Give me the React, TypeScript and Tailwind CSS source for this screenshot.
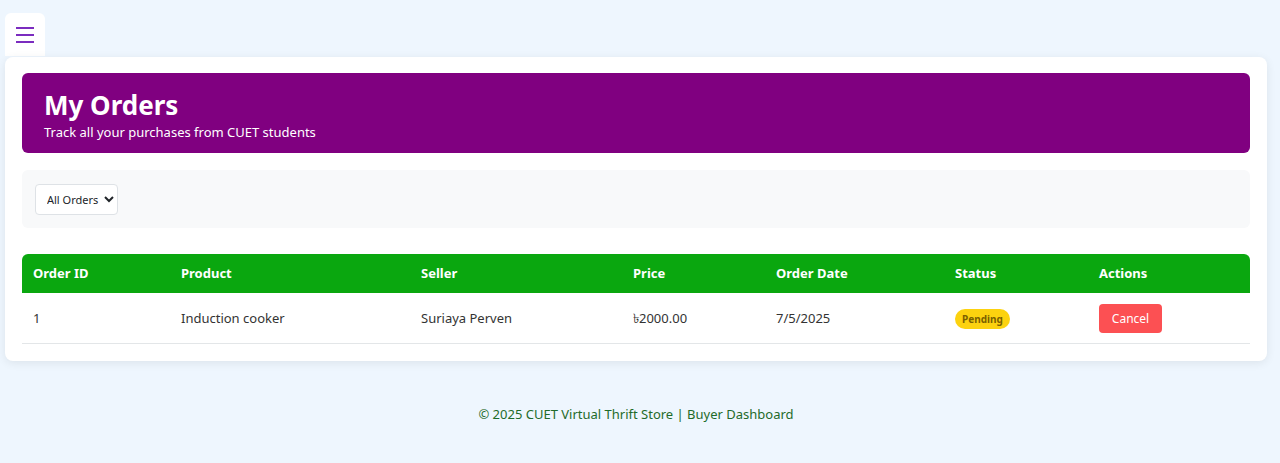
import React, { useState } from 'react';

const orders = [
  {
    id: 1,
    product: 'Induction cooker',
    seller: 'Suriaya Perven',
    price: '৳2000.00',
    date: '7/5/2025',
    status: 'Pending',
  },
];

const App = () => {
  const [filter, setFilter] = useState('all');

  return (
    <div
      className="min-h-[463px] bg-[#eef6fe] pt-[13px] pl-[5px] pr-[13px] text-[13px] text-[#212529]"
      style={{ fontFamily: '"Noto Sans", "Segoe UI", sans-serif' }}
    >
      <button className="flex h-[43px] w-[40px] items-center justify-center rounded-t-md rounded-b-none bg-white text-[#7b2cbf]">
        <svg width="18" height="16" viewBox="0 0 18 16" fill="none" stroke="currentColor" strokeWidth="2">
          <path d="M0 1h18M0 8h18M0 15h18" />
        </svg>
      </button>

      <div className="mt-[1px] rounded-lg bg-white px-[17px] pt-[16px] pb-[17px] shadow-[0_2px_10px_rgba(0,0,0,0.08)]">
        <div className="h-[80px] rounded-md bg-[#800080] px-[22px] pt-[16px] text-white">
          <h1 className="text-[26px] leading-[32px] font-bold">My Orders</h1>
          <p className="mt-[2px] text-[13px] leading-[18px]">Track all your purchases from CUET students</p>
        </div>

        <div className="mt-[17px] flex h-[58px] items-center rounded-md bg-[#f8f9fa] px-[13px]">
          <select
            value={filter}
            onChange={(e) => setFilter(e.target.value)}
            className="h-[31px] w-[83px] rounded border border-[#dee2e6] bg-white pl-[7px] text-[11px] text-[#212529]"
          >
            <option value="all">All Orders</option>
            <option value="pending">Pending</option>
            <option value="completed">Completed</option>
            <option value="cancelled">Cancelled</option>
          </select>
        </div>

        <table className="mt-[26px] w-full border-collapse text-left text-[13px]">
          <thead>
            <tr className="h-[39px] bg-[#0aa70f] text-white">
              <th className="w-[148px] rounded-tl-md pl-[11px] font-bold">Order ID</th>
              <th className="w-[240px] pl-[11px] font-bold">Product</th>
              <th className="w-[212px] pl-[11px] font-bold">Seller</th>
              <th className="w-[143px] pl-[11px] font-bold">Price</th>
              <th className="w-[179px] pl-[11px] font-bold">Order Date</th>
              <th className="w-[144px] pl-[11px] font-bold">Status</th>
              <th className="rounded-tr-md pl-[11px] font-bold">Actions</th>
            </tr>
          </thead>
          <tbody>
            {orders.map((order) => (
              <tr key={order.id} className="h-[50px] border-b border-[#e3e6e8] text-[#333]">
                <td className="pl-[11px] pt-[2px]">{order.id}</td>
                <td className="pl-[11px] pt-[2px]">{order.product}</td>
                <td className="pl-[11px] pt-[2px]">{order.seller}</td>
                <td className="pl-[11px] pt-[2px]">{order.price}</td>
                <td className="pl-[11px] pt-[2px]">{order.date}</td>
                <td className="pl-[11px] pt-[2px]">
                  <span className="inline-flex h-[20px] items-center rounded-full bg-[#fcd20f] px-[7px] text-[10px] font-bold text-[#7a5f00]">
                    {order.status}
                  </span>
                </td>
                <td className="pl-[11px] pt-[2px]">
                  <button className="h-[29px] w-[63px] rounded bg-[#fc5053] text-[12px] text-white">
                    Cancel
                  </button>
                </td>
              </tr>
            ))}
          </tbody>
        </table>
      </div>

      <footer className="pt-[44px] text-center text-[13px] text-[#1f6b2a]">
        © 2025 CUET Virtual Thrift Store | Buyer Dashboard
      </footer>
    </div>
  );
};

export default App;
